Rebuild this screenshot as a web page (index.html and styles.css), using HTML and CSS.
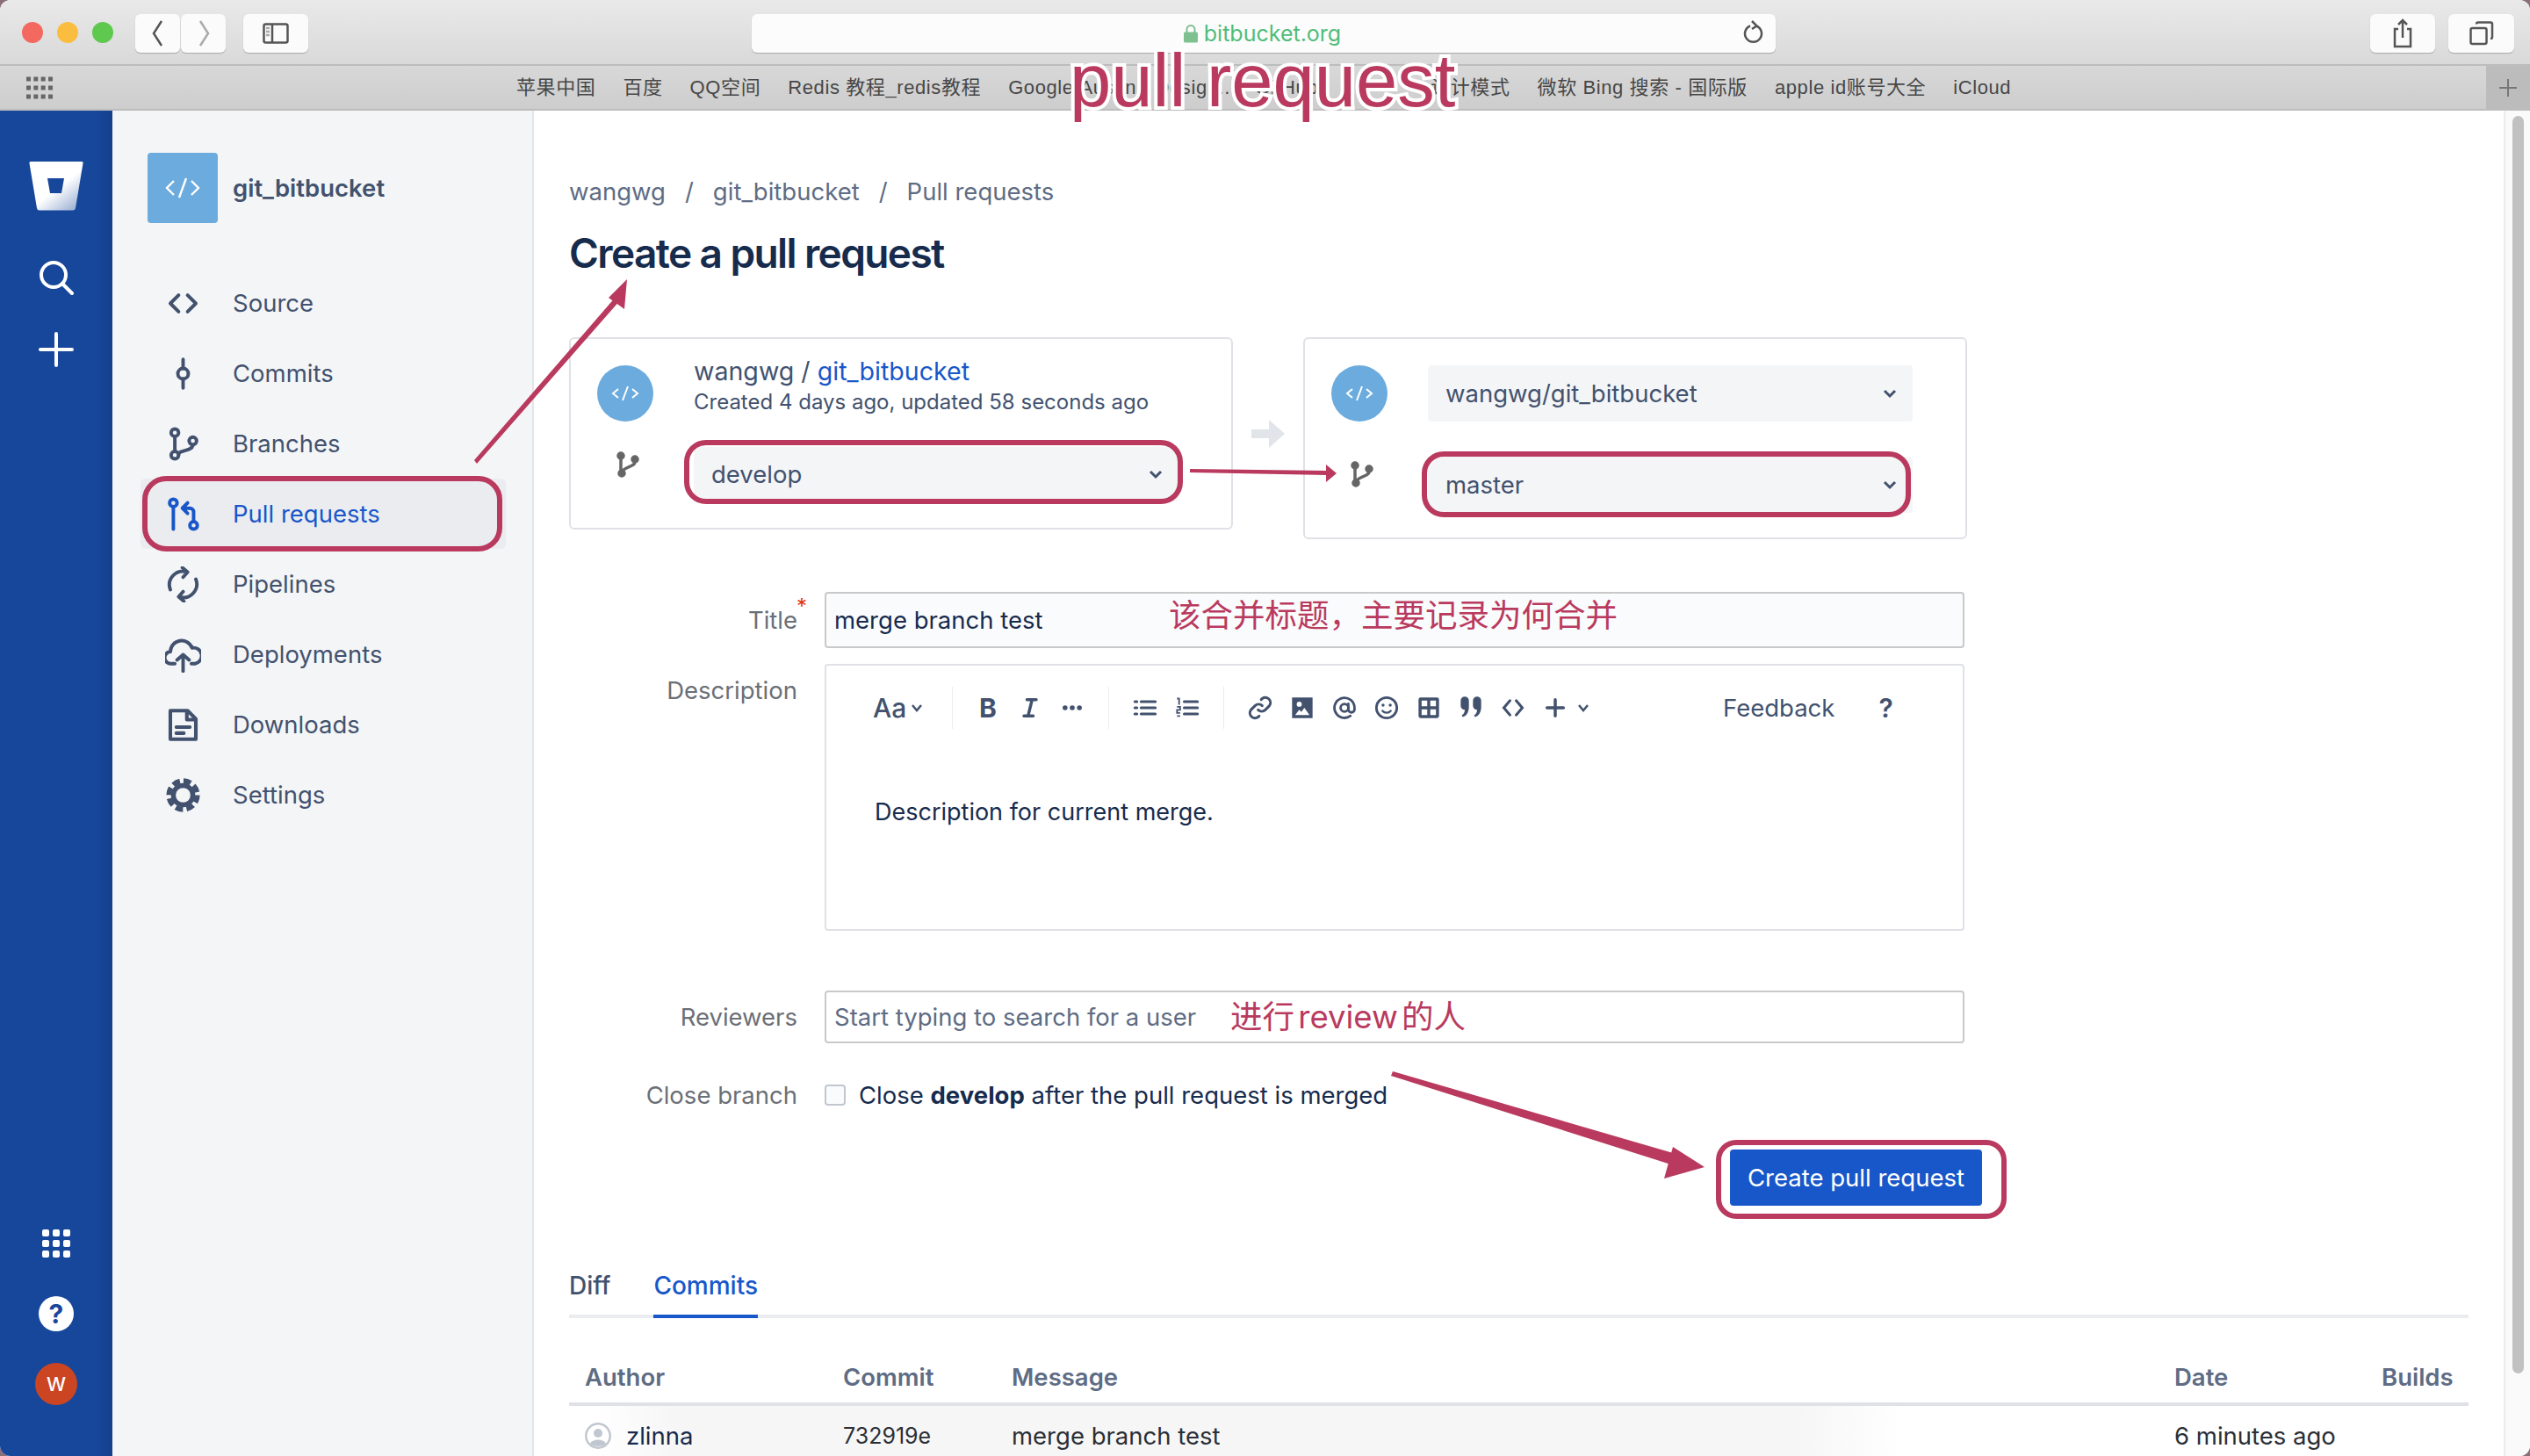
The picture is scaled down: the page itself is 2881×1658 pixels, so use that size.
FILE: index.html
```html
<!DOCTYPE html>
<html lang="en">
<head>
    <meta charset="UTF-8">
    <title>Create a pull request</title>
    <link rel="stylesheet" href="styles.css">
</head>
<body>
<div class="window">
    <header class="toolbar">
        <div class="lights"><i class="light red"></i><i class="light yellow"></i><i class="light green"></i></div>
        <div class="nav-btns">
            <button class="tbtn arrow-btn"><svg width="20" height="32" viewBox="0 0 20 32"><path d="M14 2 5 16l9 14" class="tb-line"/></svg></button>
            <button class="tbtn arrow-btn"><svg width="20" height="32" viewBox="0 0 20 32"><path d="M6 2l9 14-9 14" class="tb-line faded"/></svg></button>
        </div>
        <button class="tbtn side-btn"><svg width="30" height="24" viewBox="0 0 30 24"><rect x="1.500" y="1.500" width="27" height="21" rx="2" class="tb-line"/><path d="M11 2v20" class="tb-line"/><path d="M4 6h4M4 10h4M4 14h4" class="tb-line faded"/></svg></button>
        <div class="urlbar">
            <span class="url"><svg width="18" height="22" viewBox="0 0 18 22"><path d="M4.500 10V6.500a4.500 4.500 0 0 1 9 0V10" fill="none" stroke="#7fc090" stroke-width="2"/><rect x="1" y="9.500" width="16" height="12" rx="1.500" fill="#7fc090"/></svg>bitbucket.org</span>
            <svg class="reload" width="24" height="28" viewBox="0 0 24 28"><path d="M15 7.500a9.500 9.500 0 1 1-7 0" class="tb-line"/><path d="M10 2l5.500 5.500L10 11" class="tb-line"/></svg>
        </div>
        <button class="tbtn share-btn"><svg width="24" height="34" viewBox="0 0 24 34"><path d="M7 12H3v20h18V12h-4M12 22V2M7 7l5-5 5 5" class="tb-line"/></svg></button>
        <button class="tbtn tabs-btn"><svg width="28" height="28" viewBox="0 0 28 28"><rect x="1.500" y="8" width="18" height="18" rx="2" class="tb-line"/><path d="M8 3.500a2 2 0 0 1 2-2h14a2 2 0 0 1 2 2V18a2 2 0 0 1-2 2" class="tb-line"/></svg></button>
    </header>
    <nav class="bookmarks">
        <svg class="bm-grid" width="30" height="26" viewBox="0 0 30 26"><path d="M0 3h30M0 13h30M0 23h30" stroke="#666" stroke-width="5" stroke-dasharray="5 3.330" fill="none"/></svg>
        <div class="bm-list">
            <span>苹果中国</span><span>百度</span><span>QQ空间</span><span>Redis 教程_redis教程</span>
            <span class="bm-hidden">Google/Austin - Design... · GitHub</span><span>设计模式</span>
            <span>微软 Bing 搜索 - 国际版</span><span>apple id账号大全</span><span>iCloud</span>
        </div>
        <div class="bm-add"><svg width="24" height="24" viewBox="0 0 24 24"><path d="M12 2v20M2 12h20" stroke="#777" stroke-width="2"/></svg></div>
    </nav>

    <div class="app">
        <aside class="global">
            <svg class="logo" width="62" height="56" viewBox="0 0 62 56">
                <defs><linearGradient id="logofade" x1="0.300" y1="0.250" x2="0.900" y2="0.950"><stop offset="0.400" stop-color="#fff"/><stop offset="1" stop-color="#9db1d3"/></linearGradient></defs>
                <path fill-rule="evenodd" fill="url(#logofade)" d="M2 0h58a1.500 1.500 0 0 1 1.500 2L53 53a3 3 0 0 1-3 2.500H12A3 3 0 0 1 9 53L.5 2A1.500 1.500 0 0 1 2 0zM21 19l3 17h13l3-17z"/>
            </svg>
            <svg class="gicon" width="48" height="48" viewBox="0 0 48 48"><circle cx="21" cy="20" r="14" fill="none" stroke="#fff" stroke-width="4"/><path d="M31 30l11 11" stroke="#fff" stroke-width="4" stroke-linecap="round"/></svg>
            <svg class="gicon" width="48" height="48" viewBox="0 0 48 48"><path d="M24 6v36M6 24h36" stroke="#fff" stroke-width="4" stroke-linecap="round"/></svg>
            <div class="global-bottom">
                <svg width="32" height="32" viewBox="0 0 32 32" fill="#fff"><rect width="8" height="8" rx="2"/><rect x="12" width="8" height="8" rx="2"/><rect x="24" width="8" height="8" rx="2"/><rect y="12" width="8" height="8" rx="2"/><rect x="12" y="12" width="8" height="8" rx="2"/><rect x="24" y="12" width="8" height="8" rx="2"/><rect y="24" width="8" height="8" rx="2"/><rect x="12" y="24" width="8" height="8" rx="2"/><rect x="24" y="24" width="8" height="8" rx="2"/></svg>
                <div class="help">?</div>
                <div class="avatar">W</div>
            </div>
        </aside>

        <aside class="repo-nav">
            <div class="repo-head">
                <div class="repo-icon"><svg width="40" height="28" viewBox="0 0 40 28"><path d="M10 6 2 14l8 8M30 6l8 8-8 8M24 3l-8 22" fill="none" stroke="#fff" stroke-width="2.400"/></svg></div>
                <span class="repo-name">git_bitbucket</span>
            </div>
            <ul class="menu">
                <li class="menu-item"><svg class="nicon" viewBox="0 0 24 24"><path d="M9 6.500 3.500 12 9 17.500M15 6.500l5.500 5.500-5.500 5.500"/></svg>Source</li>
                <li class="menu-item"><svg class="nicon" viewBox="0 0 24 24"><circle cx="12" cy="12" r="3.500"/><path d="M12 2.500v6M12 15.500v6"/></svg>Commits</li>
                <li class="menu-item"><svg class="nicon" viewBox="0 0 24 24"><circle cx="6.500" cy="4.500" r="2.500"/><circle cx="6.500" cy="19.500" r="2.500"/><circle cx="18.500" cy="10" r="2.500"/><path d="M6.500 7v10M18.500 12.500c0 3.500-5 3.500-8.500 5-1 .5-1 1-1 2"/></svg>Branches</li>
                <li class="menu-item active"><svg class="nicon" viewBox="0 0 24 24"><circle cx="5.500" cy="4.500" r="2.500"/><path d="M5.500 7v15"/><circle cx="19" cy="19.500" r="2.500"/><path d="M19 17v-6.500A2.500 2.500 0 0 0 16.500 8H12M15 4.500 11.500 8l3.500 3.500"/></svg>Pull requests</li>
                <li class="menu-item"><svg class="nicon" viewBox="0 0 24 24"><path d="M3.500 15.500A9 9 0 0 1 14 3.500M20.500 8.500A9 9 0 0 1 10 20.500M11.500 .8 15 3.800l-3 3.400M12.500 23.200 9 20.200l3-3.400"/></svg>Pipelines</li>
                <li class="menu-item"><svg class="nicon" viewBox="0 0 24 24"><path d="M6.500 18H4A4 4 0 0 1 3.500 10 7.500 7.500 0 0 1 18 7.500 5.300 5.300 0 0 1 20 18h-2.500M12 23V12M8 15.500 12 12l4 3.500" stroke-width="2.300"/></svg>Deployments</li>
                <li class="menu-item"><svg class="nicon" viewBox="0 0 24 24"><path d="M3.500 2.500H15L20.500 8v13.500h-17zM14.500 2.500V8.500h6M7.500 13.500h9M7.500 17.500h5" stroke-width="2.400"/></svg>Downloads</li>
                <li class="menu-item"><svg class="nicon gear" viewBox="0 0 24 24"><circle cx="12" cy="12" r="6.500" stroke-width="3.200"/><circle cx="12" cy="12" r="9.500" stroke-width="3.400" stroke-dasharray="5 2.460" stroke-linecap="butt"/></svg>Settings</li>
            </ul>
        </aside>

        <main class="main">
            <div class="content">
                <div class="crumbs"><span>wangwg</span><span>/</span><span>git_bitbucket</span><span>/</span><span>Pull requests</span></div>
                <h1 class="page-title">Create a pull request</h1>

                <section class="branches">
                    <div class="card card-source">
                        <div class="card-row">
                            <div class="repo-dot"><svg width="32" height="22" viewBox="0 0 32 22"><path d="M8 6l-6 5 6 5M24 6l6 5-6 5M19 3l-6 16" fill="none" stroke="#fff" stroke-width="2"/></svg></div>
                            <div class="source-info">
                                <div class="source-name">wangwg / <a class="link">git_bitbucket</a></div>
                                <div class="source-meta">Created 4 days ago, updated 58 seconds ago</div>
                            </div>
                        </div>
                        <div class="card-row branch-row">
                            <svg class="branch-icon" viewBox="0 0 28 30"><circle cx="6" cy="5" r="3"/><circle cx="22" cy="9" r="3"/><circle cx="7" cy="25" r="3"/><path d="M6 8v15M22 12c0 6-13 5-15 12"/></svg>
                            <div class="select">develop<svg class="chev" viewBox="0 0 20 20"><path d="M4 7l6 6 6-6"/></svg></div>
                        </div>
                    </div>
                    <div class="between"><svg width="38" height="32" viewBox="0 0 38 32"><path d="M0 11h20V0l18 16-18 16V21H0z" fill="#e1e5e9"/></svg></div>
                    <div class="card card-target">
                        <div class="card-row">
                            <div class="repo-dot"><svg width="32" height="22" viewBox="0 0 32 22"><path d="M8 6l-6 5 6 5M24 6l6 5-6 5M19 3l-6 16" fill="none" stroke="#fff" stroke-width="2"/></svg></div>
                            <div class="select select-repo">wangwg/git_bitbucket<svg class="chev" viewBox="0 0 20 20"><path d="M4 7l6 6 6-6"/></svg></div>
                        </div>
                        <div class="card-row branch-row target-branch">
                            <svg class="branch-icon" viewBox="0 0 28 30"><circle cx="6" cy="5" r="3"/><circle cx="22" cy="9" r="3"/><circle cx="7" cy="25" r="3"/><path d="M6 8v15M22 12c0 6-13 5-15 12"/></svg>
                            <div class="select select-master">master<svg class="chev" viewBox="0 0 20 20"><path d="M4 7l6 6 6-6"/></svg></div>
                        </div>
                    </div>
                </section>

                <form class="form">
                    <div class="field field-title">
                        <label class="field-label">Title<sup class="req">*</sup></label>
                        <div class="input input-filled">merge branch test</div>
                    </div>
                    <div class="field field-desc">
                        <label class="field-label desc-label">Description</label>
                        <div class="editor">
                            <div class="ed-bar">
                                <div class="ed-group ed-font">Aa<svg class="ed-mini" viewBox="0 0 16 16"><path d="M3 5l5 6 5-6"/></svg></div>
                                <div class="ed-group ed-marks">
                                    <span class="ed-btn ed-b">B</span>
                                    <span class="ed-btn"><svg class="eicon" viewBox="0 0 24 24"><path d="M9 4h9M6 20h9M14 4l-4 16" stroke-width="3"/></svg></span>
                                    <span class="ed-btn"><svg class="eicon" viewBox="0 0 24 24" stroke-width="0"><circle cx="5" cy="12" r="2.400" class="dot"/><circle cx="12" cy="12" r="2.400" class="dot"/><circle cx="19" cy="12" r="2.400" class="dot"/></svg></span>
                                </div>
                                <div class="ed-group">
                                    <span class="ed-btn"><svg class="eicon" viewBox="0 0 24 24"><path d="M8 6h14M8 12h14M8 18h14M2 6h2M2 12h2M2 18h2" stroke-width="2.600"/></svg></span>
                                    <span class="ed-btn"><svg class="eicon" viewBox="0 0 24 24"><path d="M9 6h13M9 12h13M9 18h13" stroke-width="2.600"/><path d="M2 3h2v6M2 11h3v3H2v3h3M2 20h3" stroke-width="1.600" stroke-linecap="butt"/></svg></span>
                                </div>
                                <div class="ed-group ed-last">
                                    <span class="ed-btn"><svg class="eicon" viewBox="0 0 24 24"><path d="M10 14a5 5 0 0 0 7 0l4-4a5 5 0 0 0-7-7l-1 1M14 10a5 5 0 0 0-7 0l-4 4a5 5 0 0 0 7 7l1-1" stroke-width="2.600"/></svg></span>
                                    <span class="ed-btn"><svg class="eicon" viewBox="0 0 24 24"><path fill-rule="evenodd" class="dot" d="M2 2h20v20H2zM9 6a2.500 2.500 0 1 0 0 5 2.500 2.500 0 0 0 0-5zM5 19h14l-5-7-3 4-2-2z"/></svg></span>
                                    <span class="ed-btn"><svg class="eicon" viewBox="0 0 24 24"><circle cx="12" cy="12" r="3.800" stroke-width="2.400"/><path d="M15.800 8v5.500a3 3 0 0 0 6 0V12a9.800 9.800 0 1 0-4 7.900" stroke-width="2.400"/></svg></span>
                                    <span class="ed-btn"><svg class="eicon" viewBox="0 0 24 24"><circle cx="12" cy="12" r="10" stroke-width="2.400"/><path d="M8 15c2 2.500 6 2.500 8 0" stroke-width="2"/><circle cx="8.500" cy="9.500" r="1.500" class="dot" stroke-width="0"/><circle cx="15.500" cy="9.500" r="1.500" class="dot" stroke-width="0"/></svg></span>
                                    <span class="ed-btn"><svg class="eicon" viewBox="0 0 24 24"><path fill-rule="evenodd" class="dot" d="M4 2h16a2 2 0 0 1 2 2v16a2 2 0 0 1-2 2H4a2 2 0 0 1-2-2V4a2 2 0 0 1 2-2zM5 5v5.500h5.500V5zM13.500 5v5.500H19V5zM5 13.500V19h5.500v-5.500zM13.500 13.500V19H19v-5.500z"/></svg></span>
                                    <span class="ed-btn"><svg class="eicon" viewBox="0 0 24 24"><path class="dot" stroke-width="0" d="M2 5a4 4 0 1 1 8 0v6c0 5-2 9-6 10l-1-1.500c2-1 3-3 3-5.500a4 4 0 0 1-4-4zM14 5a4 4 0 1 1 8 0v6c0 5-2 9-6 10l-1-1.500c2-1 3-3 3-5.500a4 4 0 0 1-4-4z"/></svg></span>
                                    <span class="ed-btn"><svg class="eicon" viewBox="0 0 24 24"><path d="M9 5l-6 7 6 7M15 5l6 7-6 7" stroke-width="2.600"/></svg></span>
                                    <span class="ed-btn"><svg class="eicon" viewBox="0 0 24 24"><path d="M12 4v16M4 12h16" stroke-width="3"/></svg></span>
                                    <svg class="ed-mini" viewBox="0 0 16 16"><path d="M3 5l5 6 5-6"/></svg>
                                </div>
                                <span class="ed-feedback">Feedback</span>
                                <span class="ed-help">?</span>
                            </div>
                            <p class="ed-text">Description for current merge.</p>
                        </div>
                    </div>
                    <div class="field field-reviewers">
                        <label class="field-label">Reviewers</label>
                        <div class="input input-empty">Start typing to search for a user</div>
                    </div>
                    <div class="field field-close">
                        <label class="field-label">Close branch</label>
                        <div class="check-line"><i class="check"></i><span>Close <b>develop</b> after the pull request is merged</span></div>
                    </div>
                    <div class="actions"><button type="button" class="btn-primary">Create pull request</button></div>
                </form>

                <div class="tabs"><span class="tab">Diff</span><span class="tab tab-on">Commits</span></div>
                <div class="grid-row grid-head"><span>Author</span><span>Commit</span><span>Message</span><span>Date</span><span>Builds</span></div>
                <div class="grid-row grid-body">
                    <span class="author"><svg width="30" height="30" viewBox="0 0 30 30"><circle cx="15" cy="15" r="15" fill="#c1c7d0"/><circle cx="15" cy="15" r="12.500" fill="#fff"/><circle cx="15" cy="12" r="5" fill="#c1c7d0"/><path d="M6 24c2-6 16-6 18 0-4 4-14 4-18 0z" fill="#c1c7d0"/></svg>zlinna</span>
                    <span class="hash">732919e</span>
                    <span>merge branch test</span>
                    <span>6 minutes ago</span>
                    <span></span>
                </div>
            </div>
            <div class="scrollbar"><div class="thumb"></div></div>
        </main>
    </div>
</div>

<svg class="notes" width="2881" height="1658" viewBox="0 0 2881 1658">
    <g class="note-box">
        <rect x="165" y="545" width="404" height="80" rx="24"/>
        <rect x="782" y="504" width="562" height="67" rx="22"/>
        <rect x="1622" y="517" width="551" height="69" rx="22"/>
        <rect x="1957" y="1301" width="325" height="84" rx="20"/>
    </g>
    <g class="note-arrow">
        <path d="M540 524 702 337l5 4L543 528z"/>
        <path d="M714 318l-3 34-18-13z"/>
        <path d="M1355 534l156 2v5l-156-3z"/>
        <path d="M1522 539l-12-10v20z"/>
        <path d="M1586 1220 1912 1315l-3 13-325-103z"/>
        <path d="M1941 1329l-46 13 10-36z"/>
    </g>
    <text class="note-text" x="1331" y="714">该合并标题，主要记录为何合并</text>
    <text class="note-text" x="1401" y="1171">进行 review 的人</text>
    <text class="note-big" x="1218" y="121">pull request</text>
</svg>
</body>
</html>
```

FILE: styles.css
```css
* {
    box-sizing: border-box;
}

html, body {
    margin: 0;
    padding: 0;
    width: 2881px;
    height: 1658px;
    overflow: hidden;
    background-color: #8a6f78;
    font-family: Inter, "Noto Sans CJK SC", sans-serif;
}

.window {
    width: 2881px;
    height: 1658px;
    border-radius: 12px;
    overflow: hidden;
    background-color: #fff;
    display: flex;
    flex-direction: column;
}

/* browser toolbar */
.toolbar {
    height: 75px;
    flex: none;
    display: flex;
    align-items: flex-start;
    padding-top: 16px;
    background: linear-gradient(#e9e9e9, #d9d9d9);
    border-bottom: 2px solid #bdbdbd;
}

.lights {
    display: flex;
    gap: 16px;
    margin: 9px 0 0 25px;
}

.light {
    width: 24px;
    height: 24px;
    border-radius: 50%;
}

.light.red { background-color: #f4695f; }
.light.yellow { background-color: #fbbd40; }
.light.green { background-color: #5fc84f; }

.tbtn {
    height: 44px;
    padding: 0;
    border: 0;
    border-radius: 6px;
    background-color: #fbfbfb;
    box-shadow: 0 1px 1px #a8a8a8;
    display: flex;
    align-items: center;
    justify-content: center;
}

.tb-line {
    fill: none;
    stroke: #555;
    stroke-width: 2.500;
}

.tb-line.faded {
    stroke: #aaa;
}

.nav-btns {
    display: flex;
    gap: 1px;
    margin-left: 25px;
}

.arrow-btn { width: 51px; }
.side-btn { width: 74px; margin-left: 20px; }

.urlbar {
    width: 1166px;
    height: 44px;
    margin-left: 505px;
    border-radius: 6px;
    background-color: #fcfcfc;
    box-shadow: 0 1px 1px #a8a8a8;
    display: flex;
    align-items: center;
    position: relative;
    justify-content: center;
}

.url {
    color: #4fbd79;
    font-size: 25px;
    display: flex;
    align-items: center;
    gap: 6px;
    margin-left: -4px;
}

.reload {
    position: absolute;
    right: 13px;
    top: 6px;
}

.share-btn { width: 74px; margin-left: 677px; }
.tabs-btn { width: 75px; margin-left: 15px; }

.bookmarks {
    height: 51px;
    flex: none;
    display: flex;
    align-items: center;
    background: linear-gradient(#d8d8d8, #cdcdcd);
    border-bottom: 2px solid #bdbdbd;
    position: relative;
}

.bm-grid {
    margin-left: 30px;
    flex: none;
}

.bm-list {
    display: flex;
    gap: 31px;
    margin-left: 528px;
    color: #474747;
    font-family: "Liberation Sans", "Noto Sans CJK SC", sans-serif;
    font-size: 22px;
    letter-spacing: 0.600px;
    line-height: 30px;
    white-space: nowrap;
}

.bm-list span {
    display: block;
    height: 30px;
}

.bm-hidden {
    width: 450px;
    overflow: hidden;
}

.bm-add {
    position: absolute;
    right: 0;
    top: 0;
    width: 50px;
    height: 49px;
    background-color: #bcbcbc;
    display: flex;
    align-items: center;
    justify-content: center;
}

/* page */
.app {
    flex: 1;
    display: flex;
    min-height: 0;
}

.global {
    width: 128px;
    flex: none;
    display: flex;
    flex-direction: column;
    align-items: center;
    padding-top: 58px;
    background: linear-gradient(90deg, #17479b 85%, #15408c);
}

.logo {
    display: block;
}

.gicon {
    margin-top: 53px;
}

.gicon + .gicon {
    margin-top: 33px;
}

.global-bottom {
    margin-top: auto;
    margin-bottom: 58px;
    display: flex;
    flex-direction: column;
    align-items: center;
}

.help {
    width: 40px;
    height: 40px;
    margin-top: 44px;
    border-radius: 50%;
    background-color: #fff;
    color: #17479b;
    font-size: 30px;
    font-weight: 700;
    line-height: 40px;
    text-align: center;
}

.avatar {
    width: 48px;
    height: 48px;
    margin-top: 36px;
    border-radius: 50%;
    background-color: #cc4522;
    color: #fff;
    font-size: 22px;
    font-weight: 500;
    line-height: 48px;
    text-align: center;
}

.repo-nav {
    width: 480px;
    flex: none;
    padding: 48px 32px 0;
    background-color: #f4f5f7;
    border-right: 2px solid #e4e5e8;
}

.repo-head {
    display: flex;
    align-items: center;
    gap: 17px;
    margin-left: 8px;
    margin-bottom: 51px;
}

.repo-icon {
    width: 80px;
    height: 80px;
    border-radius: 4px;
    background-color: #6cabdd;
    display: flex;
    align-items: center;
    justify-content: center;
}

.repo-name {
    color: #42526e;
    font-size: 27.500px;
    font-weight: 600;
}

.menu {
    list-style: none;
    margin: 0;
    padding: 0;
    width: 416px;
}

.menu-item {
    height: 80px;
    display: flex;
    align-items: center;
    gap: 36px;
    padding-left: 28px;
    color: #42526e;
    font-size: 27.500px;
    border-radius: 6px;
}

.menu-item.active {
    background-color: #ebecf0;
    color: #1857c9;
}

.nicon {
    width: 41px;
    height: 41px;
    flex: none;
    fill: none;
    stroke: currentColor;
    stroke-width: 2.300;
    stroke-linecap: round;
    stroke-linejoin: round;
}

.nicon.gear {
    stroke-linecap: butt;
}

/* content */
.main {
    flex: 1;
    min-width: 0;
    display: flex;
}

.content {
    flex: 1;
    min-width: 0;
    padding: 72px 40px 0;
}

.scrollbar {
    width: 30px;
    flex: none;
    padding: 6px 7px 0 8px;
    background-color: #fafafa;
    border-left: 2px solid #ececec;
}

.thumb {
    height: 1432px;
    border-radius: 8px;
    background-color: #c1c1c1;
}

.crumbs {
    display: flex;
    gap: 22px;
    height: 40px;
    line-height: 40px;
    color: #5e6c84;
    font-size: 27.500px;
}

.page-title {
    margin: 20px 0 0;
    height: 60px;
    line-height: 60px;
    color: #172b4d;
    font-size: 46px;
    font-weight: 600;
    letter-spacing: -1.600px;
}

.branches {
    display: flex;
    align-items: flex-start;
    margin-top: 66px;
    height: 230px;
}

.card {
    width: 756px;
    border: 2px solid #dfe1e6;
    border-radius: 6px;
    padding: 30px 30px 0;
}

.card-source {
    height: 219px;
}

.card-target {
    height: 230px;
}

.card-row {
    display: flex;
    align-items: flex-start;
}

.repo-dot {
    width: 64px;
    height: 64px;
    flex: none;
    border-radius: 50%;
    background-color: #6cabdd;
    display: flex;
    align-items: center;
    justify-content: center;
}

.source-info {
    margin-left: 46px;
    margin-top: -12px;
}

.source-name {
    color: #42526e;
    font-size: 28.600px;
    line-height: 38px;
}

.link {
    color: #1857c9;
}

.source-meta {
    color: #42526e;
    font-size: 24px;
    line-height: 32px;
}

.branch-row {
    margin-top: 29px;
}

.target-branch {
    margin-top: 40px;
}

.branch-icon {
    width: 28px;
    height: 30px;
    margin: 5px 0 0 21px;
    flex: none;
    fill: #666;
    stroke: #666;
    stroke-width: 3.500;
}

.select {
    width: 552px;
    height: 62px;
    display: flex;
    align-items: center;
    justify-content: space-between;
    padding: 0 16px 0 20px;
    margin-left: 61px;
    border-radius: 4px;
    background-color: #f4f5f7;
    color: #42526e;
    font-size: 27.500px;
}

.select-repo {
    height: 64px;
    margin-left: 46px;
}

.select-master {
    height: 64px;
}

.chev {
    width: 20px;
    height: 20px;
    fill: none;
    stroke: #42526e;
    stroke-width: 3;
}

.between {
    width: 80px;
    padding: 94px 0 0 21px;
}

.form {
    margin-top: 60px;
}

.field {
    display: flex;
    align-items: center;
}

.field-label {
    width: 260px;
    flex: none;
    margin-right: 31px;
    text-align: right;
    color: #6b6f76;
    font-size: 27.500px;
    position: relative;
}

.req {
    position: absolute;
    right: -11px;
    top: -10px;
    color: #de350b;
    font-size: 24px;
    line-height: 24px;
}

.input {
    width: 1298px;
    border: 2px solid #c9c9c9;
    border-radius: 4px;
    padding-left: 9px;
    display: flex;
    align-items: center;
    font-size: 27.500px;
}

.input-filled {
    height: 64px;
    background-color: #fafbfc;
    color: #172b4d;
}

.input-empty {
    height: 60px;
    background-color: #fff;
    color: #5e6c84;
}

.field-desc {
    margin-top: 18px;
    align-items: flex-start;
}

.desc-label {
    margin-top: 13px;
}

.editor {
    width: 1298px;
    height: 304px;
    border: 2px solid #dfe1e6;
    border-radius: 4px;
    padding: 24px 0 0 53px;
}

.ed-bar {
    height: 48px;
    display: flex;
    align-items: center;
    color: #42526e;
}

.ed-group {
    height: 48px;
    display: flex;
    align-items: center;
    padding: 0 17px;
    border-right: 1px solid #ebecf0;
}

.ed-marks {
    padding-left: 16px;
}

.ed-font {
    width: 91px;
    padding: 0;
    font-size: 30px;
    font-weight: 500;
    gap: 4px;
    color: #42526e;
}

.ed-last {
    border-right: 0;
}

.ed-btn {
    width: 48px;
    height: 48px;
    display: flex;
    align-items: center;
    justify-content: center;
}

.ed-b {
    font-size: 30px;
    font-weight: 700;
}

.eicon {
    width: 28px;
    height: 28px;
    fill: none;
    stroke: #42526e;
    stroke-linecap: round;
}

.eicon .dot,
.dot {
    fill: #42526e;
    stroke: none;
}

.ed-mini {
    width: 16px;
    height: 16px;
    fill: none;
    stroke: #42526e;
    stroke-width: 2.500;
}

.ed-feedback {
    margin-left: 134px;
    font-size: 27.500px;
}

.ed-help {
    margin-left: 50px;
    font-size: 30px;
    font-weight: 600;
}

.ed-text {
    margin: 75px 0 0 2px;
    line-height: 40px;
    font-size: 27px;
    color: #172b4d;
}

.field-reviewers {
    margin-top: 68px;
}

.field-close {
    margin-top: 39px;
    height: 40px;
}

.check-line {
    display: flex;
    align-items: center;
    gap: 15px;
    color: #172b4d;
    font-size: 27.500px;
}

.check {
    width: 24px;
    height: 24px;
    border: 2px solid #c1c7d0;
    border-radius: 4px;
    background-color: #fafbfc;
}

.actions {
    margin-top: 42px;
    padding-left: 1322px;
}

.btn-primary {
    width: 287px;
    height: 64px;
    border: 0;
    border-radius: 4px;
    background-color: #1857c9;
    color: #fff;
    font-family: inherit;
    font-size: 27.500px;
    white-space: nowrap;
    padding: 0;
}

.tabs {
    display: flex;
    gap: 49px;
    height: 72px;
    margin-top: 56px;
    border-bottom: 4px solid #ebecf0;
}

.tab {
    height: 72px;
    line-height: 70px;
    color: #42526e;
    font-size: 28px;
    font-weight: 500;
}

.tab-on {
    color: #1857c9;
    border-bottom: 4px solid #1857c9;
}

.grid-row {
    display: grid;
    grid-template-columns: 294px 192px 1324px 236px 1fr;
    padding-left: 18px;
    align-items: center;
    font-size: 27.500px;
}

.grid-head {
    height: 100px;
    padding-top: 38px;
    border-bottom: 4px solid #dfe1e6;
    color: #5e6c84;
    font-weight: 600;
}

.grid-body {
    height: 68px;
    color: #2b2f36;
    background: linear-gradient(90deg, #fff 30px, #f6f6f7 120px, #f6f6f7 1400px, #fff 1520px);
}

.author {
    display: flex;
    align-items: center;
    gap: 17px;
    color: #172b4d;
}

.hash {
    font-size: 25px;
}

/* annotations drawn over the screenshot */
.notes {
    position: absolute;
    left: 0;
    top: 0;
    pointer-events: none;
}

.note-box rect {
    fill: none;
    stroke: #b93a5e;
    stroke-width: 6;
}

.note-arrow path {
    fill: #b93a5e;
}

.note-text {
    fill: #b93a5e;
    font-family: Inter, "Noto Sans CJK SC", sans-serif;
    font-size: 36.500px;
    word-spacing: -6px;
}

.note-big {
    fill: #b93a5e;
    stroke: #fff;
    stroke-width: 8px;
    paint-order: stroke;
    font-family: "Liberation Sans", sans-serif;
    font-size: 85px;
}
```
